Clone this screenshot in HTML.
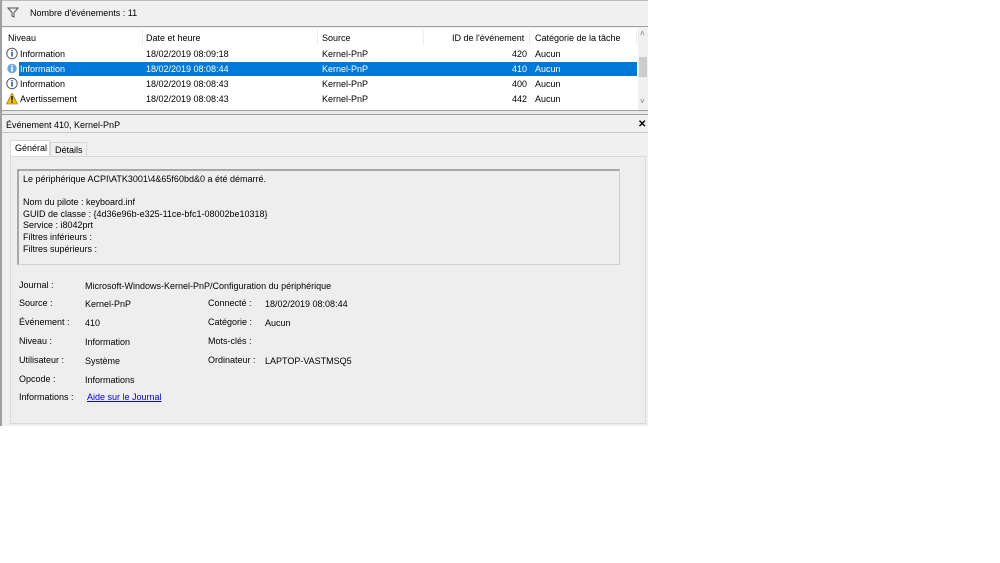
<!DOCTYPE html>
<html><head><meta charset="utf-8"><style>
*{margin:0;padding:0;box-sizing:border-box}
body{width:1000px;height:563px;background:#fff;font-family:"Liberation Sans",sans-serif;font-size:9px;color:#000;position:relative;overflow:hidden}
.a{position:absolute;white-space:nowrap}
</style></head><body>
<div class="a" style="left:0;top:0;width:648px;height:426px;background:#f0f0f0;border-left:2px solid #a0a0a0"></div>
<div class="a" style="left:2px;top:0;width:646px;height:27px;background:#f0f0f0;border-top:1px solid #bbb;border-bottom:1px solid #a0a0a0"></div>
<svg class="a" style="left:7px;top:7px" width="12" height="11"><path d="M1 1H11L7 5.5V10L5 9V5.5Z" fill="none" stroke="#555" stroke-width="1"/></svg>
<div class="a" style="left:30px;top:8px">Nombre d'événements : 11</div>
<div class="a" style="left:2px;top:28px;width:636px;height:82px;background:#fff"></div>
<div class="a" style="left:638px;top:28px;width:10px;height:82px;background:#f0f0f0"></div>
<div class="a" style="left:639px;top:57px;width:8px;height:20px;background:#cdcdcd"></div>
<div class="a" style="left:640px;top:29px;color:#777;font-size:8px">˄</div>
<div class="a" style="left:640px;top:97px;color:#777;font-size:8px">˅</div>
<div class="a" style="left:142px;top:30px;width:1px;height:15px;background:#ececec"></div>
<div class="a" style="left:317px;top:30px;width:1px;height:15px;background:#ececec"></div>
<div class="a" style="left:423px;top:30px;width:1px;height:15px;background:#ececec"></div>
<div class="a" style="left:529px;top:30px;width:1px;height:15px;background:#ececec"></div>
<div class="a" style="left:636px;top:30px;width:1px;height:15px;background:#ececec"></div>
<div class="a" style="left:8px;top:33px">Niveau</div>
<div class="a" style="left:146px;top:33px">Date et heure</div>
<div class="a" style="left:322px;top:33px">Source</div>
<div class="a" style="left:452px;top:33px">ID de l'événement</div>
<div class="a" style="left:535px;top:33px">Catégorie de la tâche</div>
<div class="a" style="left:19px;top:62px;width:618px;height:14px;background:#0078d7"></div>
<svg class="a" style="left:6px;top:47px" width="13" height="60">
<g fill="#fff" stroke="#555"><circle cx="6" cy="6.5" r="5.2"/><circle cx="6" cy="36.5" r="5.2"/></g>
<circle cx="6" cy="21.5" r="5.2" fill="#6aa7e8" stroke="#fff"/>
<g fill="#1c5fb4"><rect x="5.2" y="5" width="1.6" height="4.5"/><rect x="5.2" y="3" width="1.6" height="1.3"/><rect x="5.2" y="35" width="1.6" height="4.5"/><rect x="5.2" y="33" width="1.6" height="1.3"/></g>
<g fill="#fff"><rect x="5.2" y="20" width="1.6" height="4.5"/><rect x="5.2" y="18" width="1.6" height="1.3"/></g>
<path d="M6 46L11.5 57H0.5Z" fill="#f5c400" stroke="#8a6d00" stroke-width=".6"/><rect x="5.3" y="49" width="1.4" height="4.5"/><rect x="5.3" y="54.5" width="1.4" height="1.3"/>
</svg>
<div class="a" style="left:20px;top:49px">Information</div><div class="a" style="left:146px;top:49px">18/02/2019 08:09:18</div><div class="a" style="left:322px;top:49px">Kernel-PnP</div><div class="a" style="left:512px;top:49px">420</div><div class="a" style="left:535px;top:49px">Aucun</div>
<div style="color:#fff"><div class="a" style="left:20px;top:64px">Information</div><div class="a" style="left:146px;top:64px">18/02/2019 08:08:44</div><div class="a" style="left:322px;top:64px">Kernel-PnP</div><div class="a" style="left:512px;top:64px">410</div><div class="a" style="left:535px;top:64px">Aucun</div></div>
<div class="a" style="left:20px;top:79px">Information</div><div class="a" style="left:146px;top:79px">18/02/2019 08:08:43</div><div class="a" style="left:322px;top:79px">Kernel-PnP</div><div class="a" style="left:512px;top:79px">400</div><div class="a" style="left:535px;top:79px">Aucun</div>
<div class="a" style="left:20px;top:94px">Avertissement</div><div class="a" style="left:146px;top:94px">18/02/2019 08:08:43</div><div class="a" style="left:322px;top:94px">Kernel-PnP</div><div class="a" style="left:512px;top:94px">442</div><div class="a" style="left:535px;top:94px">Aucun</div>
<div class="a" style="left:2px;top:110px;width:646px;height:5px;background:#e8e8e8;border-top:1px solid #a0a0a0;border-bottom:1px solid #a0a0a0"></div>
<div class="a" style="left:2px;top:115px;width:646px;height:18px;background:#f0f0f0;border-bottom:1px solid #c8c8c8"></div>
<div class="a" style="left:6px;top:120px">Événement 410, Kernel-PnP</div>
<div class="a" style="left:638px;top:119px;font-weight:bold;font-size:10px">✕</div>
<div class="a" style="left:10px;top:140px;width:40px;height:17px;background:#fff;border:1px solid #d9d9d9;border-bottom:none"></div>
<div class="a" style="left:15px;top:143px">Général</div>
<div class="a" style="left:50px;top:142px;width:37px;height:15px;background:#f0f0f0;border:1px solid #d9d9d9;border-bottom:none"></div>
<div class="a" style="left:55px;top:145px">Détails</div>
<div class="a" style="left:10px;top:156px;width:636px;height:268px;background:#eeeeee;border:1px solid #d9d9d9"></div>
<div class="a" style="left:17px;top:169px;width:603px;height:96px;background:#eeeeee;border:1px solid #d0d0d0;border-top:2px solid #a8a8a8;border-left:2px solid #a8a8a8"></div>
<div class="a" style="left:23px;top:174px;line-height:11.6px">Le périphérique ACPI\ATK3001\4&amp;65f60bd&amp;0 a été démarré.<br><br>Nom du pilote : keyboard.inf<br>GUID de classe : {4d36e96b-e325-11ce-bfc1-08002be10318}<br>Service : i8042prt<br>Filtres inférieurs :<br>Filtres supérieurs :</div>
<div class="a" style="left:19px;top:280px">Journal :</div><div class="a" style="left:85px;top:281px">Microsoft-Windows-Kernel-PnP/Configuration du périphérique</div>
<div class="a" style="left:19px;top:298px">Source :</div><div class="a" style="left:85px;top:299px">Kernel-PnP</div>
<div class="a" style="left:208px;top:298px">Connecté :</div><div class="a" style="left:265px;top:299px">18/02/2019 08:08:44</div>
<div class="a" style="left:19px;top:317px">Événement :</div><div class="a" style="left:85px;top:318px">410</div>
<div class="a" style="left:208px;top:317px">Catégorie :</div><div class="a" style="left:265px;top:318px">Aucun</div>
<div class="a" style="left:19px;top:336px">Niveau :</div><div class="a" style="left:85px;top:337px">Information</div>
<div class="a" style="left:208px;top:336px">Mots-clés :</div>
<div class="a" style="left:19px;top:355px">Utilisateur :</div><div class="a" style="left:85px;top:356px">Système</div>
<div class="a" style="left:208px;top:355px">Ordinateur :</div><div class="a" style="left:265px;top:356px">LAPTOP-VASTMSQ5</div>
<div class="a" style="left:19px;top:374px">Opcode :</div><div class="a" style="left:85px;top:375px">Informations</div>
<div class="a" style="left:19px;top:392px">Informations :</div><div class="a" style="left:87px;top:392px;color:#0000ee;text-decoration:underline">Aide sur le Journal</div>
</body></html>
